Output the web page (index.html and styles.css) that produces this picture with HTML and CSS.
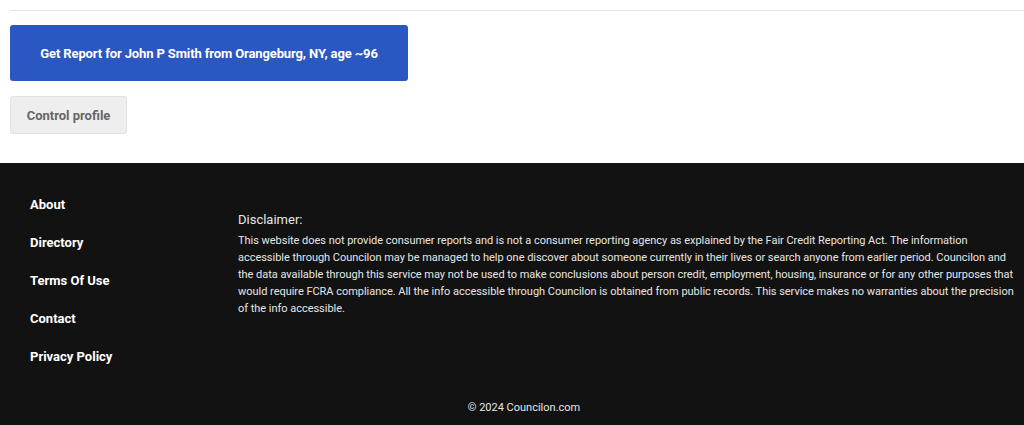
FILE: index.html
```html
<!DOCTYPE html>
<html>
<head>
<meta charset="utf-8">
<link rel="stylesheet" href="styles.css">
</head>
<body>
<main class="main">
  <div class="divider"></div>
  <div class="actions">
    <button class="btn btn-primary">Get Report for John P Smith from Orangeburg, NY, age ~96</button>
    <button class="btn btn-secondary">Control profile</button>
  </div>
</main>
<footer class="footer">
  <div class="footer-top">
    <nav class="footer-nav">
      <a href="#">About</a>
      <a href="#">Directory</a>
      <a href="#">Terms Of Use</a>
      <a href="#">Contact</a>
      <a href="#">Privacy Policy</a>
    </nav>
    <div class="disclaimer">
      <div class="disclaimer-title">Disclaimer:</div>
      <p class="disclaimer-text">This website does not provide consumer reports and is not a consumer reporting agency as explained by the Fair Credit Reporting Act. The information<br>accessible through Councilon may be managed to help one discover about someone currently in their lives or search anyone from earlier period. Councilon and<br>the data available through this service may not be used to make conclusions about person credit, employment, housing, insurance or for any other purposes that<br>would require FCRA compliance. All the info accessible through Councilon is obtained from public records. This service makes no warranties about the precision<br>of the info accessible.</p>
    </div>
  </div>
  <div class="copyright">© 2024 Councilon.com</div>
</footer>
</body>
</html>
```

FILE: styles.css
```css
html, body {
  margin: 0;
  padding: 0;
  background: #fff;
  font-family: Roboto, "Liberation Sans", sans-serif;
}
.main {
  padding: 10px 0 29px 10px;
}
.divider {
  height: 1px;
  background: #e4e4e4;
}
.actions {
  display: flex;
  flex-direction: column;
  align-items: flex-start;
  gap: 15px;
  padding-top: 14px;
}
.btn {
  font-family: Roboto, "Liberation Sans", sans-serif;
  font-weight: 700;
  font-size: 13px;
  border-radius: 3px;
  cursor: pointer;
}
.btn-primary {
  width: 398px;
  height: 56px;
  background: #2a57c1;
  color: #fff;
  border: none;
  letter-spacing: -0.12px;
}
.btn-secondary {
  width: 117px;
  height: 38px;
  background: #eeeeee;
  color: #666;
  border: 1px solid #e2e2e2;
}
.footer {
  background: #121212;
  color: #fff;
  padding: 33px 0 0;
  height: 262px;
  box-sizing: border-box;
  display: flex;
  flex-direction: column;
}
.footer-top {
  display: flex;
  padding-left: 30px;
}
.footer-nav {
  width: 208px;
  flex-shrink: 0;
  display: flex;
  flex-direction: column;
  gap: 21px;
}
.footer-nav a {
  color: #fff;
  text-decoration: none;
  font-weight: 700;
  font-size: 13px;
  line-height: 17px;
}
.disclaimer {
  padding-top: 11px;
  color: #e6e6e6;
}
.disclaimer-title {
  font-size: 13px;
  line-height: 25px;
}
.disclaimer-text {
  margin: 0;
  font-size: 11px;
  line-height: 17px;
  letter-spacing: -0.03px;
  white-space: nowrap;
}
.copyright {
  margin-top: auto;
  text-align: center;
  font-size: 11px;
  color: #e6e6e6;
  padding: 0 0 11px 24px;
}
```
